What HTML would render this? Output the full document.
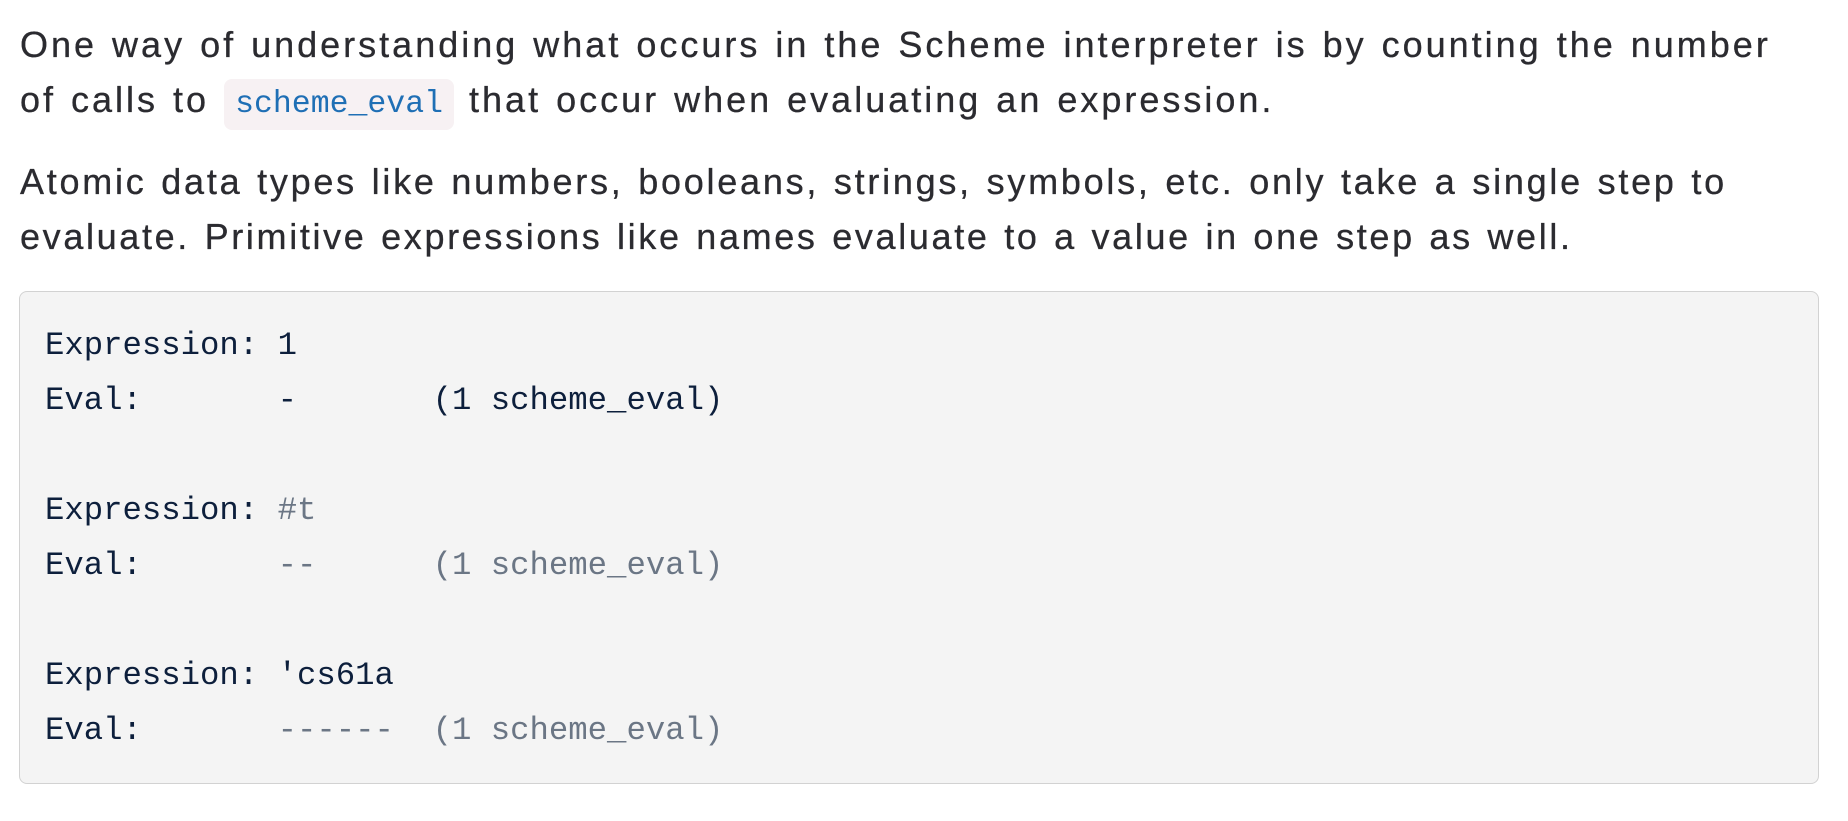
<!DOCTYPE html>
<html><head><meta charset="utf-8"><style>
html,body{margin:0;padding:0;background:#fff;width:1848px;height:821px;overflow:hidden}
body{font-family:"Liberation Sans",sans-serif;color:#2b2b30;font-size:36px;line-height:55px;letter-spacing:3px;word-spacing:2px;-webkit-text-stroke:0.3px #2b2b30}
p{margin:0;position:absolute;left:20px;width:1820px}
code{font-family:"Liberation Mono",monospace;font-size:31.5px;letter-spacing:0;word-spacing:0;color:#1f6fb5;-webkit-text-stroke:0;background:#f7f1f3;border-radius:8px;padding:8px 11px}
pre{position:absolute;left:19px;top:291px;width:1748px;height:443px;margin:0;background:#f4f4f4;border:1.5px solid #d2d2d2;border-radius:8px;padding:26px 25px 22px 25px;font-family:"Liberation Mono",monospace;font-size:32.3px;line-height:55px;letter-spacing:0;word-spacing:0;color:#0d1f3c;-webkit-text-stroke:0}
.g{color:#6b7685}
</style></head><body>
<p style="top:17px">One way of understanding what occurs in the Scheme interpreter is by counting the number<br>of calls to <code>scheme_eval</code> that occur when evaluating an expression.</p>
<p style="top:154px;letter-spacing:2.75px">Atomic data types like numbers, booleans, strings, symbols, etc. only take a single step to<br><span style="letter-spacing:2.65px">evaluate. Primitive expressions like names evaluate to a value in one step as well.</span></p>
<pre>Expression: 1
Eval:       -       (1 scheme_eval)

Expression: <span class="g">#t</span>
Eval:       <span class="g">--      (1 scheme_eval)</span>

Expression: 'cs61a
Eval:       <span class="g">------  (1 scheme_eval)</span></pre>
</body></html>
